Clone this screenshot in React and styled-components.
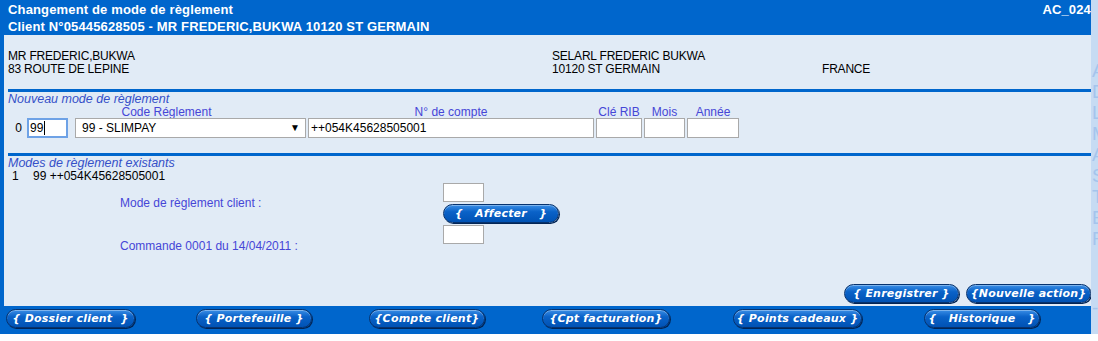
import React from "react";
import styled, { createGlobalStyle } from "styled-components";

const GlobalStyle = createGlobalStyle`
  body {
    margin: 0;
    background: #fff;
    font-family: "Liberation Sans", Arial, sans-serif;
    font-size: 12px;
    color: #000;
  }
`;

const BLUE = "#0066cc";

const Page = styled.div`
  display: flex;
  align-items: flex-start;
`;

const Panel = styled.div`
  width: 1091px;
  height: 334px;
  display: flex;
  flex-direction: column;
  overflow: hidden;
`;

const Header = styled.div`
  height: 35px;
  background: ${BLUE};
  color: #fff;
  font-weight: bold;
  font-size: 13px;
  letter-spacing: 0.15px;
  line-height: 17px;
  padding: 1px 0 0 8px;
  box-sizing: border-box;
  display: flex;
`;

const Titles = styled.div`
  flex: 1;
`;

const ScreenCode = styled.div`
  white-space: nowrap;
`;

const Body = styled.div`
  flex: 1;
  background: #e1ebf6;
  border-left: 4px solid ${BLUE};
  padding-left: 4px;
  display: flex;
  flex-direction: column;
`;

const Address = styled.div`
  margin-top: 15px;
  display: grid;
  grid-template-columns: 544px 270px 1fr;
  line-height: 13px;
  letter-spacing: -0.2px;
`;

const Rule = styled.div`
  height: 3px;
  background: ${BLUE};
  margin-top: ${(p) => p.$top}px;
`;

const SectionTitle = styled.div`
  font-style: italic;
  font-size: 12.5px;
  color: #3550c8;
  line-height: 14px;
`;

const FormGrid = styled.div`
  display: grid;
  grid-template-columns: 17px 279px 286px 46px 41px 52px;
  column-gap: 2px;
  grid-template-rows: 12px 20px;
`;

const ColLabel = styled.div`
  color: #4646d6;
  text-align: center;
  line-height: 12px;
  white-space: nowrap;
`;

const RowIndex = styled.div`
  text-align: right;
  padding-right: 3px;
  line-height: 20px;
`;

const CodeCell = styled.div`
  display: flex;
  gap: 7px;
`;

const TextBox = styled.div`
  box-sizing: border-box;
  width: ${(p) => (p.$w ? `${p.$w}px` : "100%")};
  height: ${(p) => p.$h || 20}px;
  background: #fff;
  border: 1px solid #a9a9a9;
  padding: 0 2px;
  line-height: 18px;
  white-space: nowrap;
  display: flex;
  align-items: center;
`;

const FocusBox = styled(TextBox)`
  border: 2px solid #6ea2e6;
  padding: 0 1px;
`;

const Caret = styled.span`
  display: inline-block;
  width: 1px;
  height: 14px;
  background: #000;
  margin-left: 1px;
`;

const SelectBox = styled(TextBox)`
  justify-content: space-between;
  padding: 0 5px 0 6px;
`;

const Arrow = styled.span`
  font-size: 10px;
`;

const ExistingRow = styled.div`
  display: grid;
  grid-template-columns: 21px auto;
  line-height: 13px;
  padding-left: 4px;
`;

const AssignGrid = styled.div`
  display: grid;
  grid-template-columns: 323px auto;
  grid-template-rows: 19px 19px 19px 20px;
  row-gap: 2px;
  margin-left: 112px;
`;

const AssignLabel = styled.div`
  color: #4646d6;
  align-self: center;
  grid-row: ${(p) => p.$rows};
  grid-column: 1;
`;

const Slot = styled.div`
  grid-column: 2;
  grid-row: ${(p) => p.$row};
`;

const Actions = styled.div`
  margin-top: 18px;
  display: flex;
  justify-content: flex-end;
  gap: 7px;
`;

const PillButton = styled.button`
  box-sizing: border-box;
  width: ${(p) => p.$w}px;
  height: 19px;
  margin-left: ${(p) => p.$ml || 0}px;
  padding: 0;
  border: 1px solid #06326e;
  border-radius: 10px;
  background: linear-gradient(#3a8ee6 0%, #0a62c8 40%, #0052b4 100%);
  box-shadow: 1px 1px 0 #022556, inset 0 1px 0 rgba(255, 255, 255, 0.35);
  color: #fff;
  font-family: "DejaVu Sans", Verdana, sans-serif;
  font-weight: bold;
  font-style: italic;
  font-size: 11px;
  letter-spacing: 0.2px;
  line-height: 16px;
  white-space: pre;
  text-align: center;
  cursor: pointer;
`;

const Footer = styled.div`
  height: 28px;
  background: ${BLUE};
  display: flex;
  align-items: flex-start;
  padding-top: 3px;
  box-sizing: border-box;
`;

const SideStrip = styled.div`
  width: 7px;
  height: 334px;
  background: #c6dbf3;
  overflow: hidden;
  padding: 60px 0 0 1px;
  box-sizing: border-box;
  color: #a5c4ec;
  font-size: 19px;
  line-height: 21px;
  white-space: nowrap;
`;

const StripDash = styled.div`
  margin-top: 48px;
`;

const footerButtons = [
  { label: "{ Dossier client  }", w: 129, ml: 6 },
  { label: "{ Portefeuille }", w: 116, ml: 61 },
  { label: "{Compte client}", w: 116, ml: 57 },
  { label: "{Cpt facturation}", w: 128, ml: 57 },
  { label: "{ Points cadeaux }", w: 129, ml: 63 },
  { label: "{   Historique   }", w: 116, ml: 62 },
];

const stripLetters = ["A", "D", "L", "M", "A", "S", "T", "E", "R"];

export default function App() {
  return (
    <>
      <GlobalStyle />
      <Page>
        <Panel>
          <Header>
            <Titles>
              <div>Changement de mode de règlement</div>
              <div>Client N°05445628505 - MR FREDERIC,BUKWA 10120 ST GERMAIN</div>
            </Titles>
            <ScreenCode>AC_024</ScreenCode>
          </Header>

          <Body>
            <Address>
              <div>MR FREDERIC,BUKWA</div>
              <div>SELARL FREDERIC BUKWA</div>
              <div />
              <div>83 ROUTE DE LEPINE</div>
              <div>10120 ST GERMAIN</div>
              <div>FRANCE</div>
            </Address>

            <Rule $top={13} />
            <SectionTitle>Nouveau mode de règlement</SectionTitle>
            <FormGrid>
              <div />
              <ColLabel>Code Réglement</ColLabel>
              <ColLabel>N° de compte</ColLabel>
              <ColLabel>Clé RIB</ColLabel>
              <ColLabel>Mois</ColLabel>
              <ColLabel>Année</ColLabel>
              <RowIndex>0</RowIndex>
              <CodeCell>
                <FocusBox $w={41}>
                  99<Caret />
                </FocusBox>
                <SelectBox $w={231}>
                  <span>99 - SLIMPAY</span>
                  <Arrow>▼</Arrow>
                </SelectBox>
              </CodeCell>
              <TextBox>++054K45628505001</TextBox>
              <TextBox />
              <TextBox />
              <TextBox />
            </FormGrid>

            <Rule $top={15} />
            <SectionTitle>Modes de règlement existants</SectionTitle>
            <ExistingRow>
              <span>1</span>
              <span>99 ++054K45628505001</span>
            </ExistingRow>

            <AssignGrid>
              <AssignLabel $rows="1 / 3">Mode de règlement client :</AssignLabel>
              <Slot $row={1}>
                <TextBox $w={41} $h={19} />
              </Slot>
              <Slot $row={2}>
                <PillButton $w={116}>{"{   Affecter   }"}</PillButton>
              </Slot>
              <Slot $row={3}>
                <TextBox $w={41} $h={19} />
              </Slot>
              <AssignLabel $rows="3 / 5">Commande 0001 du 14/04/2011 :</AssignLabel>
            </AssignGrid>

            <Actions>
              <PillButton $w={115}>{"{ Enregistrer }"}</PillButton>
              <PillButton $w={125}>{"{Nouvelle action}"}</PillButton>
            </Actions>
          </Body>

          <Footer>
            {footerButtons.map((b) => (
              <PillButton key={b.label} $w={b.w} $ml={b.ml}>
                {b.label}
              </PillButton>
            ))}
          </Footer>
        </Panel>

        <SideStrip>
          {stripLetters.map((l, i) => (
            <div key={i}>{l}</div>
          ))}
          <StripDash>-</StripDash>
        </SideStrip>
      </Page>
    </>
  );
}
